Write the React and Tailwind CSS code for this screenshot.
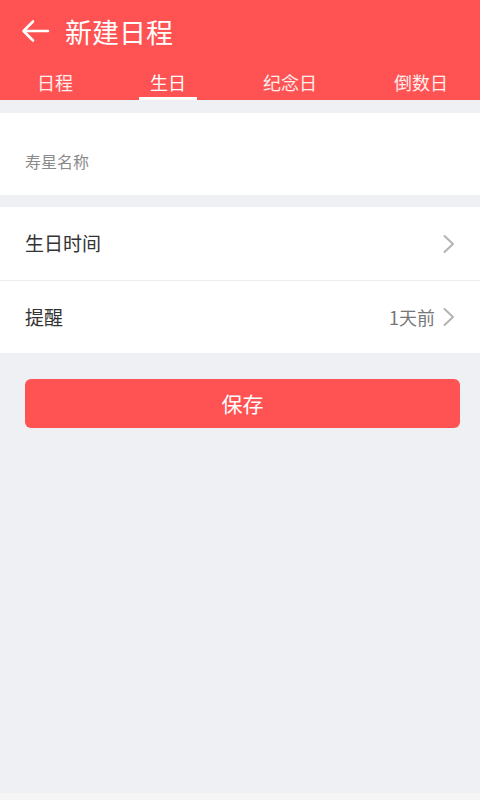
import { useState } from 'react';

const tabs = ['日程', '生日', '纪念日', '倒数日'];

const Chevron = () => (
    <svg width="14" height="20" viewBox="0 0 14 20" fill="none" className="shrink-0">
        <path d="M2.5 2 L11 10 L2.5 18" stroke="#b3b3b3" strokeWidth="2" strokeLinecap="round" strokeLinejoin="round" />
    </svg>
);

const App = () => {
    const [active, setActive] = useState(1);
    const [name, setName] = useState('');

    return (
        <div
            className="w-[480px] h-[800px] flex flex-col bg-[#eff0f4] overflow-hidden"
            style={{ fontFamily: '"Noto Sans CJK SC", "Noto Sans", sans-serif' }}
        >
            {/* Header */}
            <div className="bg-[#ff5252] text-white">
                <div className="h-[62px] flex items-center pl-[20px]">
                    <svg width="30" height="24" viewBox="0 0 30 24" fill="none">
                        <path d="M28 12 H4 M13 2.5 L3.5 12 L13 21.5" stroke="#fff" strokeWidth="2.6" strokeLinecap="round" strokeLinejoin="round" />
                    </svg>
                    <h1 className="ml-[15px] text-[27px] leading-none">新建日程</h1>
                </div>
                <div className="h-[38px] flex items-stretch pl-[26px] gap-[55px] overflow-hidden">
                    {tabs.map((t, i) => (
                        <button
                            key={t}
                            onClick={() => setActive(i)}
                            className={`relative px-[11px] text-[18px] leading-none whitespace-nowrap pt-[2px] ${i === active ? 'text-white' : 'text-white/90'}`}
                        >
                            {t}
                            {i === active && <span className="absolute left-0 right-0 bottom-0 h-[3px] bg-white" />}
                        </button>
                    ))}
                </div>
            </div>

            {/* Name input */}
            <div className="mt-[13px] bg-white h-[82px] flex items-center px-[25px] pt-[13px]">
                <input
                    value={name}
                    onChange={(e) => setName(e.target.value)}
                    placeholder="寿星名称"
                    className="w-full text-[16px] outline-none placeholder:text-[#8a8a8a] text-[#333]"
                />
            </div>

            {/* Options */}
            <div className="mt-[12px] bg-white">
                <div className="h-[74px] flex items-center pl-[25px] pr-[24px] border-b border-[#ededed]">
                    <span className="flex-1 text-[19px] text-[#333]">生日时间</span>
                    <Chevron />
                </div>
                <div className="h-[72px] flex items-center pl-[25px] pr-[24px]">
                    <span className="flex-1 text-[19px] text-[#333]">提醒</span>
                    <span className="text-[18px] text-[#777] mr-[7px]">1天前</span>
                    <Chevron />
                </div>
            </div>

            {/* Save */}
            <div className="pl-[25px] pr-[20px] mt-[26px]">
                <button className="w-full h-[49px] rounded-[6px] bg-[#ff5252] text-white text-[21px]">保存</button>
            </div>

            <div className="flex-1" />
            <div className="h-[7px] bg-[#f5f5f5]" />
        </div>
    );
};

export default App;
